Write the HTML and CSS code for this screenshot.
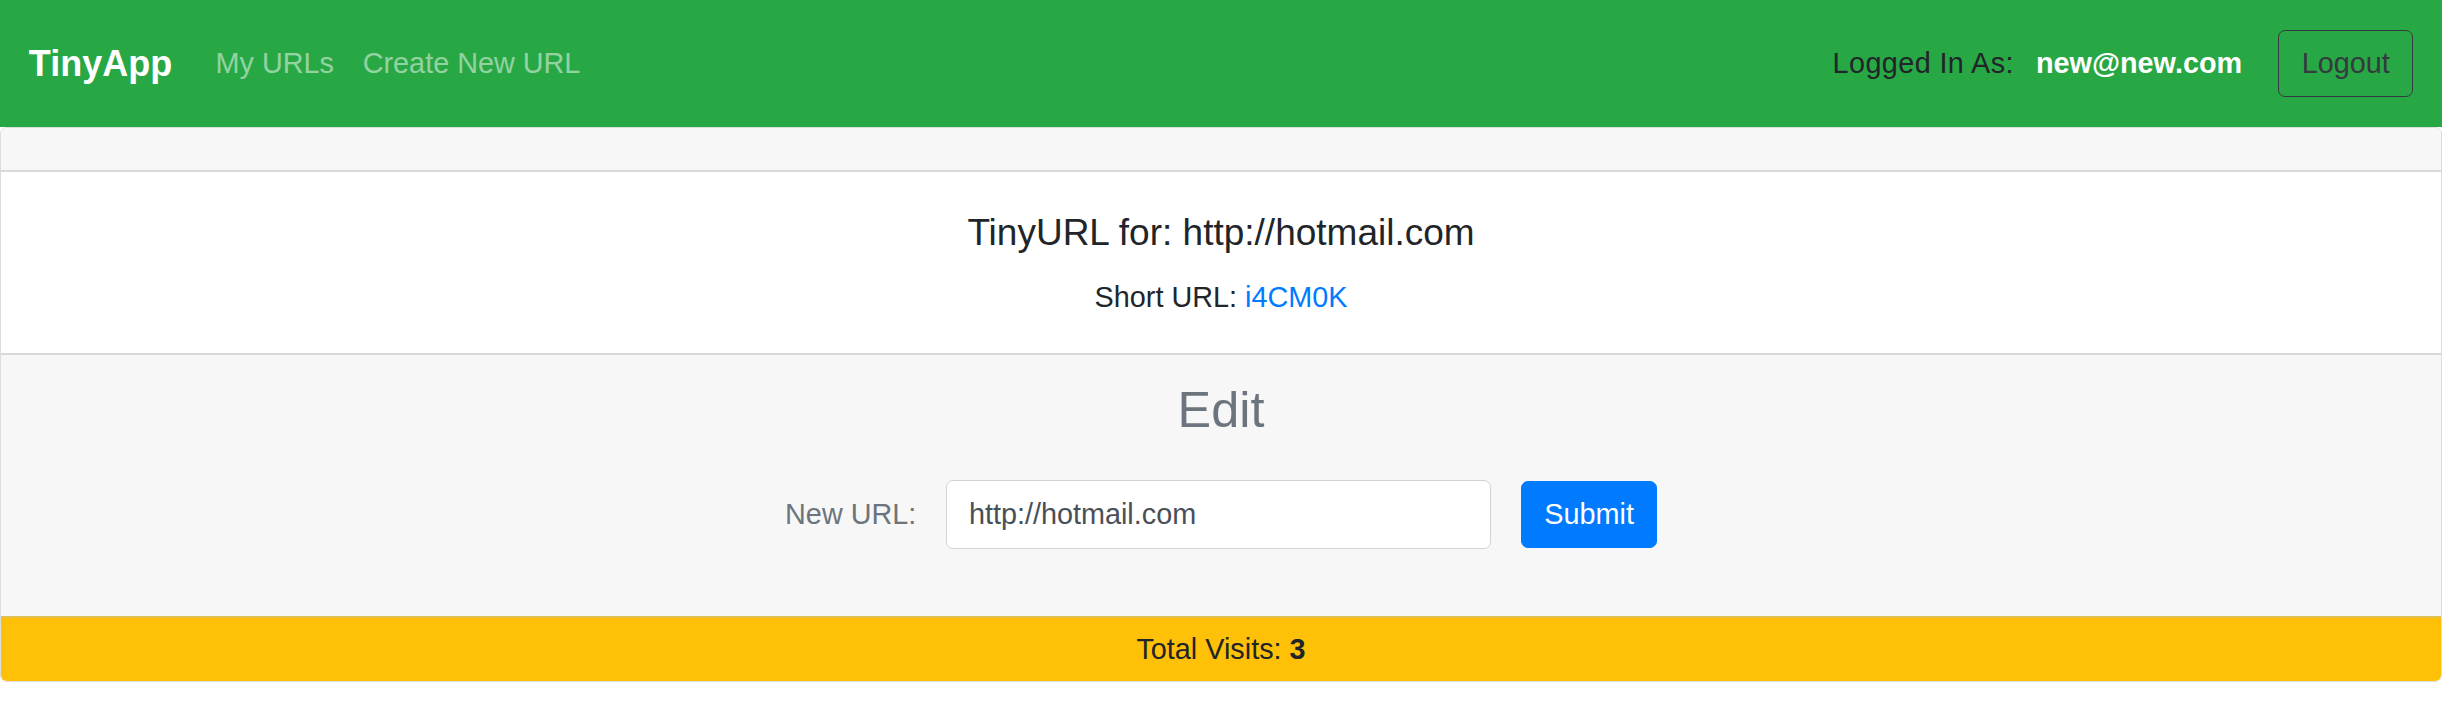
FILE: index.html
```html
<!DOCTYPE html>
<html lang="en">
<head>
<meta charset="utf-8">
<title>TinyApp</title>
<link rel="stylesheet" href="styles.css">
</head>
<body>
<nav class="navbar">
  <a class="brand" href="#">TinyApp</a>
  <ul class="nav-links">
    <li><a href="#">My URLs</a></li>
    <li><a href="#">Create New URL</a></li>
  </ul>
  <div class="nav-right">
    <span class="logged">Logged In As:</span>
    <span class="email">new@new.com</span>
    <button class="btn-logout" type="button">Logout</button>
  </div>
</nav>
<main class="card">
  <div class="card-header"></div>
  <div class="card-body">
    <h5 class="card-title">TinyURL for: http://hotmail.com</h5>
    <p class="card-text">Short URL: <a href="#">i4CM0K</a></p>
  </div>
  <div class="card-footer edit">
    <h3 class="edit-title">Edit</h3>
    <form class="edit-form">
      <label class="edit-label" for="longURL">New URL:</label>
      <input class="edit-input" id="longURL" type="text" value="http://hotmail.com">
      <button class="btn-submit" type="button">Submit</button>
    </form>
  </div>
  <div class="card-footer visits">Total Visits: <b>3</b></div>
</main>
</body>
</html>
```
FILE: styles.css
```css
* { box-sizing: border-box; }
html, body { margin: 0; padding: 0; background: #fff; }
body {
  font-family: "Liberation Sans", Arial, Helvetica, sans-serif;
  font-size: 28.8px;
  line-height: 1.5;
  color: #212529;
}
a { text-decoration: none; }

.navbar {
  display: flex;
  align-items: center;
  height: 127px;
  padding: 0 28.8px;
  background: #28a745;
}
.brand {
  font-size: 36px;
  font-weight: 700;
  color: #fff;
  margin-right: 29px;
  line-height: 1.5;
}
.nav-links {
  display: flex;
  list-style: none;
  margin: 0;
  padding: 0;
}
.nav-links a {
  display: block;
  padding: 0 14.4px;
  color: rgba(255, 255, 255, 0.5);
}
.nav-right {
  margin-left: auto;
  display: flex;
  align-items: center;
}
.logged {
  color: #212529;
  letter-spacing: 0.4px;
}
.email {
  color: #fff;
  font-weight: 700;
  margin-left: 22px;
}
.btn-logout {
  margin-left: 36px;
  height: 67px;
  padding: 0 22.5px;
  font-family: inherit;
  font-size: 28.8px;
  color: #343a40;
  background: transparent;
  border: 1px solid #343a40;
  border-radius: 7px;
}

.card {
  display: flex;
  flex-direction: column;
  border: 1px solid #dcdcdc;
  border-radius: 7px;
  overflow: hidden;
}
.card-header {
  height: 44px;
  background: #f7f7f7;
  border-bottom: 2px solid #d9d9d9;
}
.card-body {
  padding: 39px 36px 34px;
  text-align: center;
}
.card-title {
  margin: 0 0 20.6px;
  font-size: 37px;
  font-weight: 500;
  line-height: 1.2;
}
.card-text { margin: 0; }
.card-text a { color: #007bff; }

.card-footer {
  border-top: 2px solid #d9d9d9;
  text-align: center;
}
.edit {
  background: #f7f7f7;
  padding: 24.6px 36px 0;
}
.edit-title {
  margin: 0 0 39.5px;
  font-size: 50.4px;
  font-weight: 500;
  line-height: 1.2;
  color: #6c757d;
}
.edit-form {
  display: flex;
  justify-content: center;
  align-items: center;
  margin: 0 0 67px;
}
.edit-label {
  color: #6c757d;
  margin-right: 30px;
}
.edit-input {
  width: 545px;
  height: 69px;
  padding: 0 21.6px;
  font-family: inherit;
  font-size: 28.8px;
  color: #495057;
  background: #fff;
  border: 1px solid #ced4da;
  border-radius: 7px;
}
.btn-submit {
  margin-left: 30px;
  height: 67px;
  padding: 0 22px;
  font-family: inherit;
  font-size: 28.8px;
  color: #fff;
  background: #007bff;
  border: 1px solid #007bff;
  border-radius: 7px;
}
.visits {
  background: #ffc107;
  padding: 10px 36px 10px;
  border-top-color: #e0c050;
}
.visits b { font-weight: 700; }
```
